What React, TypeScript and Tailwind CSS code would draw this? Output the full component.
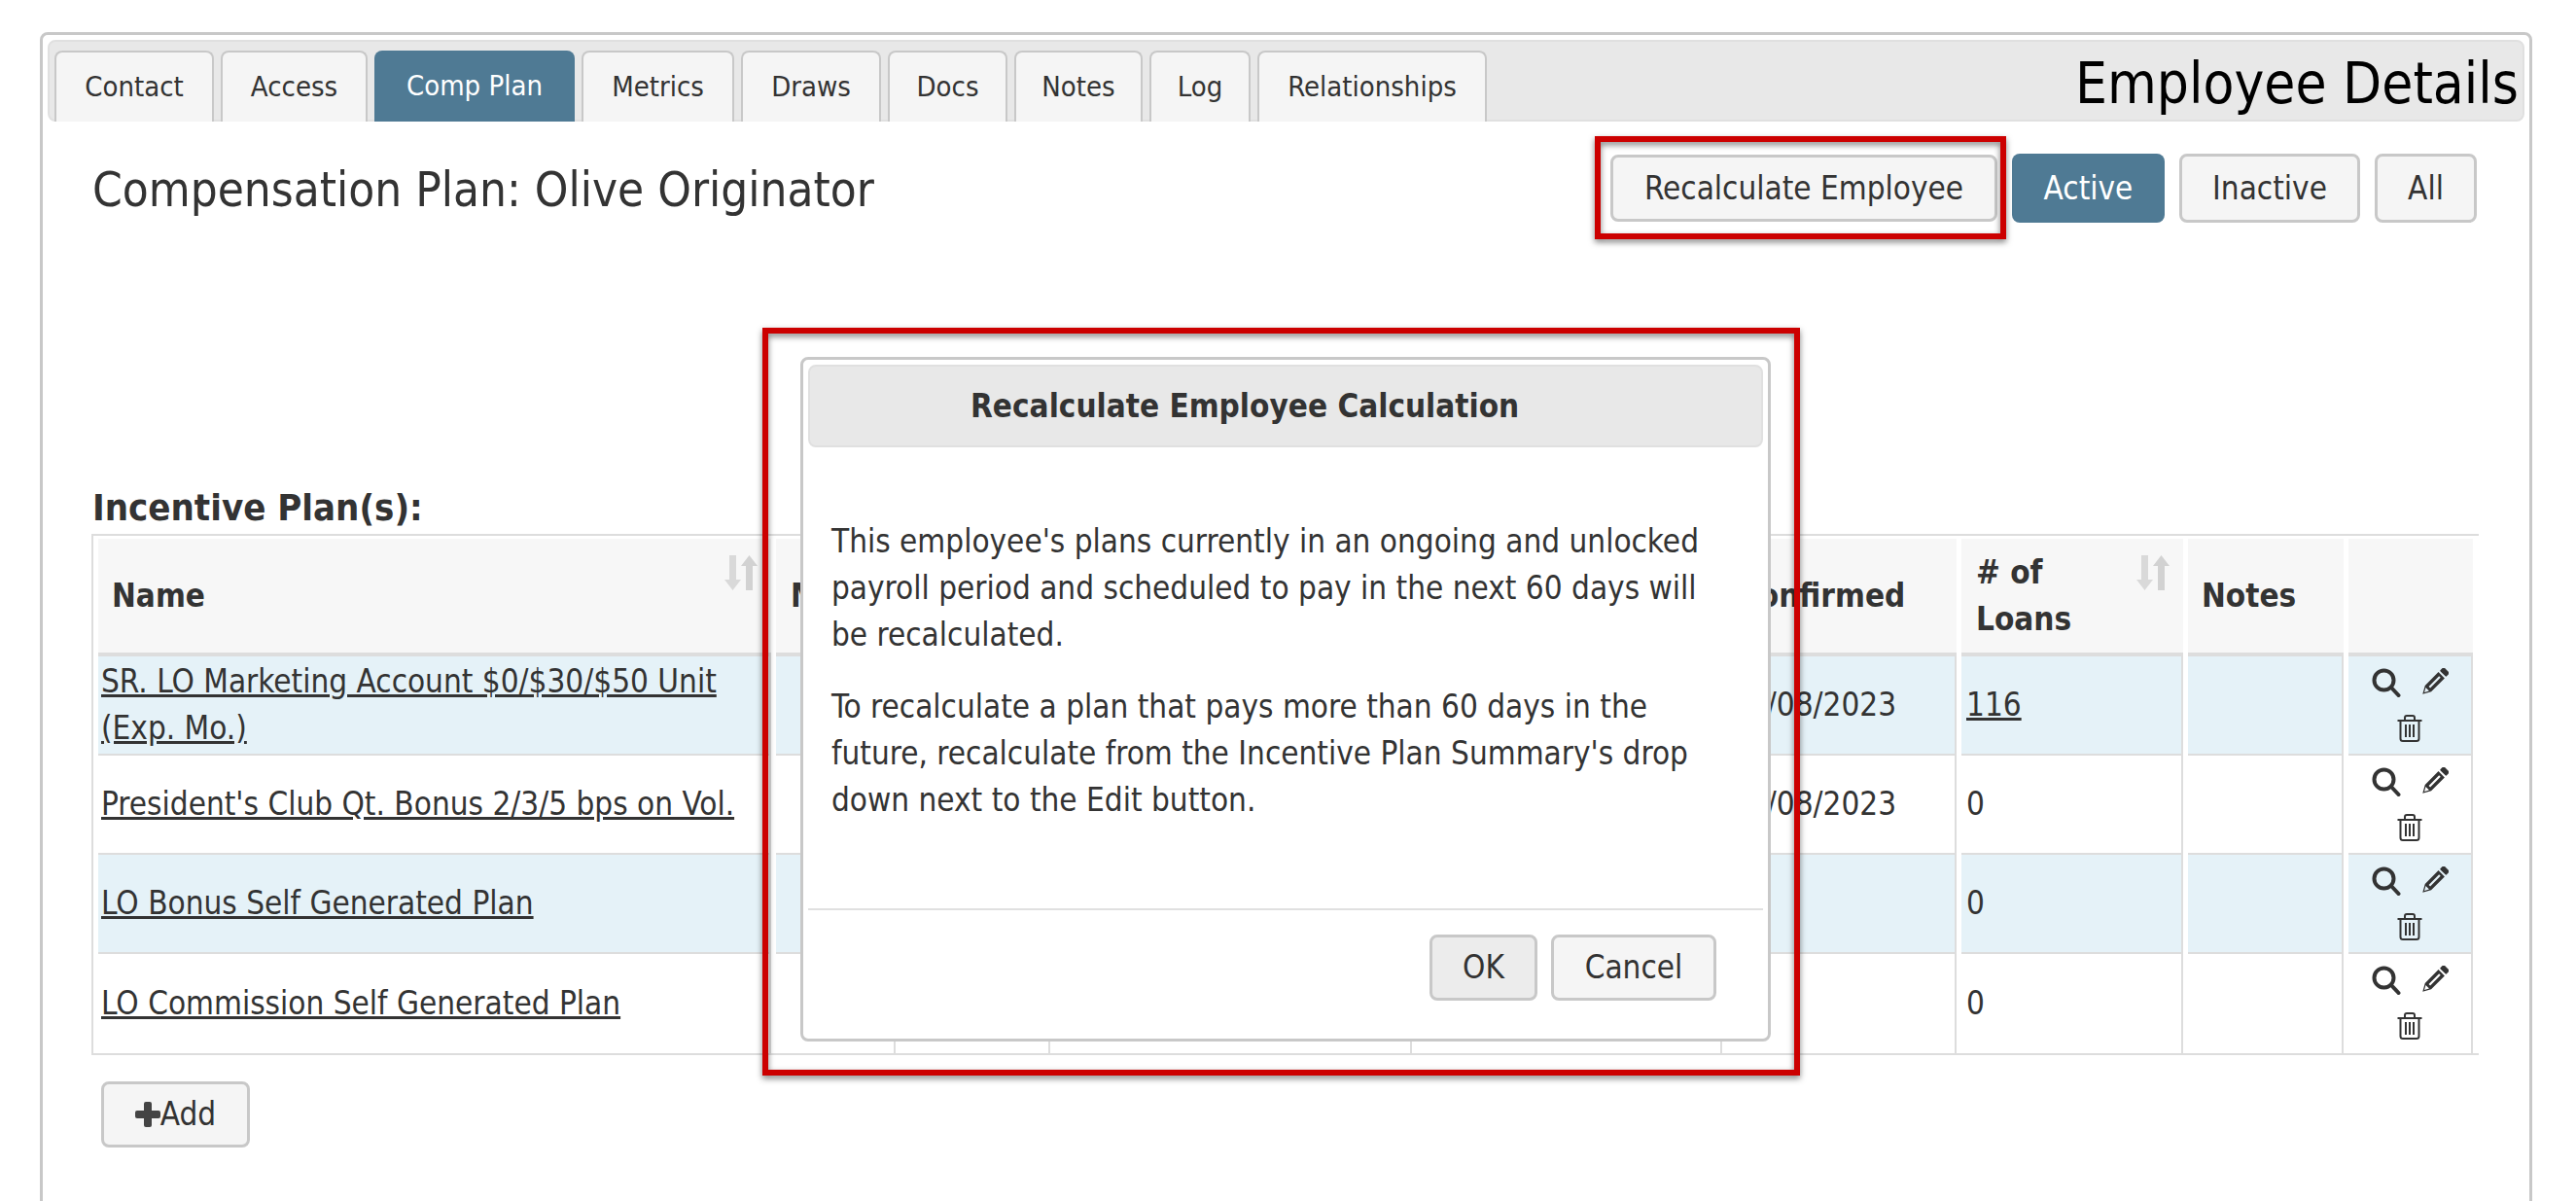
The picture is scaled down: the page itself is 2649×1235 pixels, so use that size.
const SANS = "font-['DejaVu_Sans_Condensed','DejaVu_Sans',sans-serif]";

const tabs = [
  { label: "Contact", w: "w-[164px]" },
  { label: "Access", w: "w-[151px]" },
  { label: "Comp Plan", w: "w-[206px]" },
  { label: "Metrics", w: "w-[157px]" },
  { label: "Draws", w: "w-[144px]" },
  { label: "Docs", w: "w-[123px]" },
  { label: "Notes", w: "w-[132px]" },
  { label: "Log", w: "w-[104px]" },
  { label: "Relationships", w: "w-[236px]" },
];

const rows = [
  { name: "SR. LO Marketing Account $0/$30/$50 Unit (Exp. Mo.)", date: "07/08/2023", loans: "116", blue: true },
  { name: "President's Club Qt. Bonus 2/3/5 bps on Vol.", date: "07/08/2023", loans: "0", blue: false },
  { name: "LO Bonus Self Generated Plan", date: "", loans: "0", blue: true },
  { name: "LO Commission Self Generated Plan", date: "", loans: "0", blue: false },
];

const COLS = "grid grid-cols-[692px_123px_154px_367px_314px_236px_228px_160px_128px] gap-x-[5px]";
const TH = "relative flex h-[121px] items-center border-b-4 border-[#ddd] bg-[#f7f7f7] font-bold";

const SortIcon = () => (
  <svg viewBox="0 0 34 36" className="absolute top-[17px] right-[14px] h-[36px] w-[34px]">
    <path fill="#d9d9d9" d="M5 0h7v25h5l-8.5 11L0 25h5z" />
    <path fill="#d2d2d2" d="M25.5 0 34 11h-5v25h-7V11h-5z" />
  </svg>
);

const SearchIcon = () => (
  <svg viewBox="0 0 30 30" className="h-[30px] w-[30px]" fill="none" stroke="#333" strokeWidth="4" strokeLinecap="round">
    <circle cx="12.5" cy="12.5" r="10" />
    <path d="M20 20l7.5 8" />
  </svg>
);

const PencilIcon = () => (
  <svg viewBox="0 0 28 28" className="h-[28px] w-[28px]" fill="#333">
    <g transform="rotate(45 14 14)">
      <rect x="9.5" y="-3" width="9" height="5.5" rx="1" />
      <path fillRule="evenodd" d="M9.5 4.5h9V24l-4.5 8-4.500-8zM12.900 7v15h2.200V7zM11.500 25l2.500 4.500 2.500-4.500z" />
    </g>
  </svg>
);

const TrashIcon = () => (
  <svg viewBox="0 0 26 28" className="h-[28px] w-[26px]" fill="none" stroke="#333" strokeWidth="2">
    <path d="M0.500 6h25M8 6V3a2 2 0 0 1 2-2h6a2 2 0 0 1 2 2v3M3.500 6v18.500a2.500 2.500 0 0 0 2.500 2.500h14a2.500 2.500 0 0 0 2.500-2.500V6M9 10v13M13 10v13M17 10v13" />
  </svg>
);

const Callout = ({ className }: { className: string }) => (
  <div className={`absolute border-[6px] border-[#cc0000] drop-shadow-[0_3px_3px_rgba(0,0,0,0.5)] ${className}`} />
);

const App = () => {
  return (
    <div className={`h-[1235px] w-[2649px] overflow-hidden bg-white pt-[33px] pl-[41px] text-[33px] text-[#333] ${SANS}`}>
      <div className="relative h-[1300px] w-[2563px] rounded-lg border-[3px] border-[#c8c8c8] p-[5px]">
        {/* Tab bar */}
        <div className="flex h-[84px] rounded-lg border-2 border-[#e0e0e0] bg-[#e8e8e8] pt-[9px] pl-[5px]">
          {tabs.map((t) => (
            <div
              key={t.label}
              className={`mr-[7px] flex h-[73px] items-center justify-center rounded-t-lg text-[29px] ${t.w} ${t.label === "Comp Plan" ? "bg-[#4f7a94] text-white" : "border-2 border-b-0 border-[#c8c8c8] bg-[#f5f5f5]"}`}
            >
              {t.label}
            </div>
          ))}
          <div className="-mt-[1px] ml-auto pr-[4px] text-[58px] leading-[70px] text-black">Employee Details</div>
        </div>

        {/* Title row */}
        <div className="flex h-[374px] items-start pt-[33px] pr-[49px] pl-[46px]">
          <div className="pt-[8px] text-[49px] leading-[60px]">Compensation Plan: Olive Originator</div>
          <div className="ml-auto flex items-center gap-[15px]">
            <button className="h-[69px] w-[398px] rounded-lg border-[3px] border-[#c8c8c8] bg-[#f5f5f5]">Recalculate Employee</button>
            <button className="h-[71px] w-[157px] rounded-lg bg-[#4f7a94] text-white">Active</button>
            <button className="h-[71px] w-[186px] rounded-lg border-[3px] border-[#c8c8c8] bg-[#f5f5f5]">Inactive</button>
            <button className="h-[71px] w-[105px] rounded-lg border-[3px] border-[#c8c8c8] bg-[#f5f5f5]">All</button>
          </div>
        </div>

        {/* Incentive plans */}
        <div className="ml-[46px] text-[38px] leading-[46px] font-bold">Incentive Plan(s):</div>
        <div className="mt-[4px] ml-[45px] w-[2455px] border-2 border-r-0 border-[#ddd] pt-[3px] pl-[5px] leading-[48px]">
          <div className={COLS}>
            <div className={`${TH} pl-[14px]`}>Name<SortIcon /></div>
            <div className={`${TH} pl-[15px]`}>Min</div>
            <div className={TH} />
            <div className={TH} />
            <div className={TH} />
            <div className={`${TH} pl-[11px]`}>Confirmed</div>
            <div className={`${TH} pl-[15px]`}>
              <span className="w-[120px]"># of Loans</span>
              <SortIcon />
            </div>
            <div className={`${TH} pl-[14px]`}>Notes</div>
            <div className={TH} />
          </div>
          {rows.map((r, i) => {
            const cell = `flex h-[102px] items-center ${r.blue ? "bg-[#e5f2f8]" : "bg-white"} border-r-2 ${i < 3 ? "border-b-2" : ""} border-[#ddd]`;
            return (
              <div key={r.name} className={COLS}>
                <div className={`${cell} pl-[3px]`}><a className="underline">{r.name}</a></div>
                <div className={cell} />
                <div className={cell} />
                <div className={cell} />
                <div className={cell} />
                <div className={`${cell} pl-[3px]`}>{r.date}</div>
                <div className={`${cell} pl-[5px]`}>
                  {r.loans === "116" ? <a className="underline">116</a> : r.loans}
                </div>
                <div className={cell} />
                <div className={`${cell} flex-col !items-center pt-[12px]`}>
                  <div className="flex gap-[21px]"><SearchIcon /><PencilIcon /></div>
                  <div className="mt-[18px]"><TrashIcon /></div>
                </div>
              </div>
            );
          })}
        </div>
        <button className="mt-[27px] ml-[55px] flex h-[68px] w-[153px] items-center justify-center rounded-lg border-[3px] border-[#c8c8c8] bg-[#f5f5f5]">
          <svg viewBox="0 0 26 26" className="h-[26px] w-[26px]" fill="#444">
            <rect x="9" y="0" width="8" height="26" rx="2" />
            <rect x="0" y="9" width="26" height="8" rx="2" />
          </svg>
          Add
        </button>

        {/* Dialog */}
        <div className="absolute top-[331px] left-[779px] flex h-[704px] w-[998px] flex-col rounded-lg border-[3px] border-[#c8c8c8] bg-white p-[5px]">
          <div className="flex h-[85px] shrink-0 items-center rounded-lg border-2 border-[#e0e0e0] bg-[#e8e8e8] pl-[165px] font-bold">
            Recalculate Employee Calculation
          </div>
          <div className="mt-[73px] w-[960px] pl-[24px] leading-[48px]">
            <p>This employee's plans currently in an ongoing and unlocked payroll period and scheduled to pay in the next 60 days will be recalculated.</p>
            <p className="mt-[26px]">To recalculate a plan that pays more than 60 days in the future, recalculate from the Incentive Plan Summary's drop down next to the Edit button.</p>
          </div>
          <div className="mt-[87px] flex justify-end gap-[14px] border-t-2 border-[#e0e0e0] pt-[25px] pr-[48px]">
            <button className="h-[68px] w-[111px] rounded-lg border-[3px] border-[#c8c8c8] bg-[#ececec]">OK</button>
            <button className="h-[68px] w-[170px] rounded-lg border-[3px] border-[#c8c8c8] bg-[#f5f5f5]">Cancel</button>
          </div>
        </div>

        {/* Annotation boxes */}
        <Callout className="top-[104px] left-[1596px] h-[106px] w-[423px]" />
        <Callout className="top-[301px] left-[740px] h-[769px] w-[1067px]" />
      </div>
    </div>
  );
};

export default App;
